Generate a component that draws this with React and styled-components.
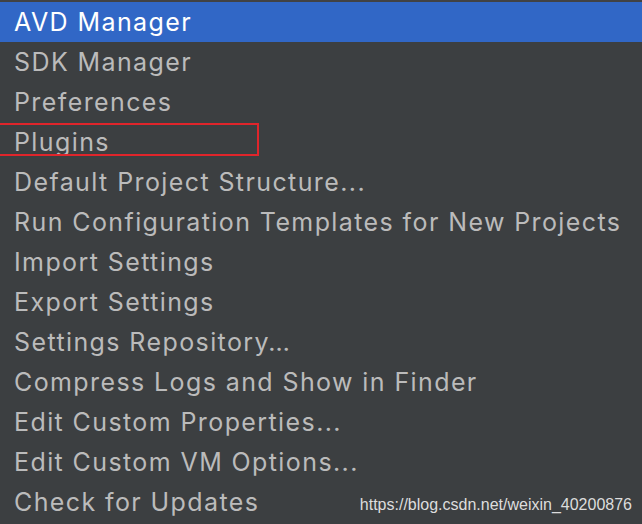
import React from 'react';
import styled, { createGlobalStyle } from 'styled-components';

const GlobalStyle = createGlobalStyle`
  html, body {
    margin: 0;
    padding: 0;
    background: #3c3f41;
  }
`;

const Menu = styled.div`
  position: relative;
  width: 642px;
  height: 524px;
  overflow: hidden;
  background: #3c3f41;
  border-top: 2px solid #414244;
  box-sizing: border-box;
  font-family: Inter, "Open Sans", sans-serif;
`;

const Item = styled.div`
  height: 40px;
  display: flex;
  align-items: center;
  padding-left: 14px;
  padding-bottom: 1px;
  box-sizing: border-box;
  font-size: 25px;
  letter-spacing: 1.4px;
  color: ${(p) => (p.$active ? '#ffffff' : '#bbbbbb')};
  background: ${(p) => (p.$active ? '#3167c6' : 'transparent')};
  white-space: nowrap;
`;

const Highlight = styled.div`
  position: absolute;
  left: -2px;
  top: 121px;
  width: 261px;
  height: 33px;
  border: 2px solid #e0252b;
  box-sizing: border-box;
`;

const Watermark = styled.div`
  position: absolute;
  right: 10px;
  top: 494px;
  font-family: "Liberation Sans", Arial, sans-serif;
  font-size: 16px;
  color: #dddddd;
`;

const items = [
  'AVD Manager',
  'SDK Manager',
  'Preferences',
  'Plugins',
  'Default Project Structure...',
  'Run Configuration Templates for New Projects',
  'Import Settings',
  'Export Settings',
  'Settings Repository\u2026',
  'Compress Logs and Show in Finder',
  'Edit Custom Properties...',
  'Edit Custom VM Options...',
  'Check for Updates',
];

export default function App() {
  return (
    <>
      <GlobalStyle />
      <Menu>
        {items.map((label, i) => (
          <Item key={label} $active={i === 0}>
            {label}
          </Item>
        ))}
        <Highlight />
        <Watermark>https://blog.csdn.net/weixin_40200876</Watermark>
      </Menu>
    </>
  );
}
